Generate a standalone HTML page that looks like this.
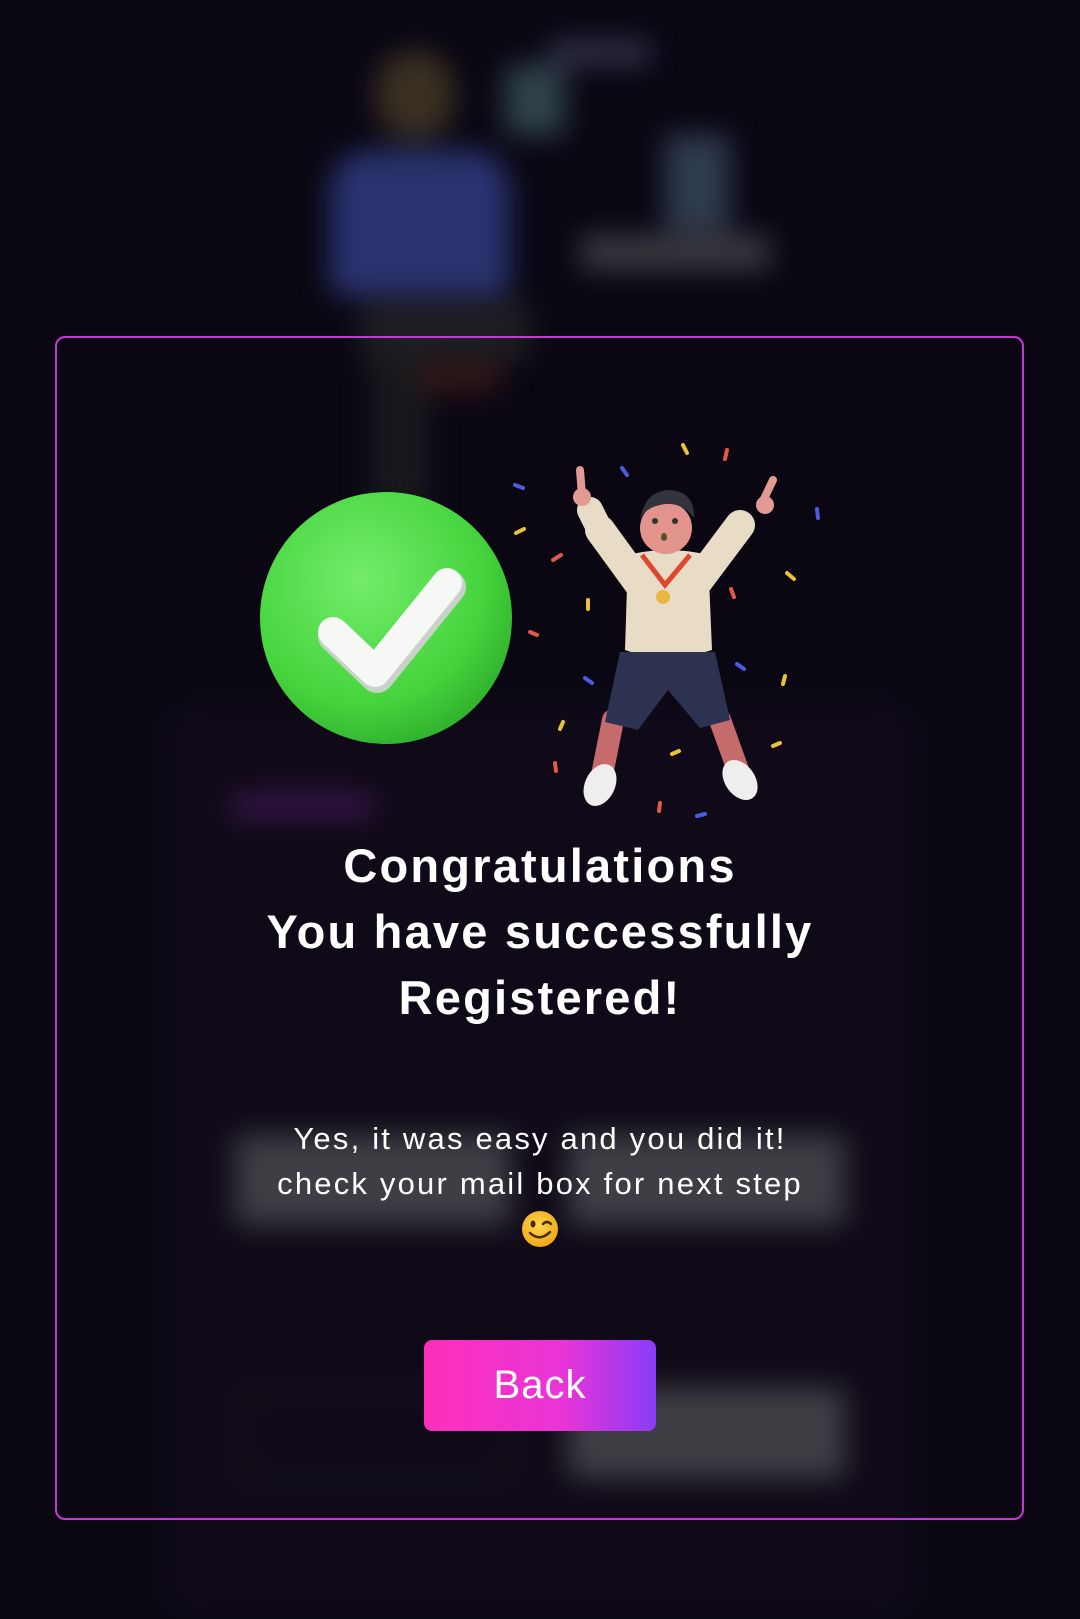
<!DOCTYPE html>
<html><head><meta charset="utf-8"><style>
html,body{margin:0;padding:0}
body{width:1080px;height:1619px;background:#0a0713;overflow:hidden;position:relative;font-family:"Liberation Sans",sans-serif}
.abs{position:absolute}
.blur{filter:blur(14px)}
.t{position:absolute;left:0;width:1080px;text-align:center;color:#fff}
</style></head><body>
<div class="abs blur" style="left:0;top:0;width:1080px;height:1619px">
  <div class="abs" style="left:375px;top:50px;width:80px;height:90px;border-radius:40px;background:#3a3022"></div>
  <div class="abs" style="left:330px;top:150px;width:180px;height:145px;border-radius:40px 40px 10px 10px;background:#2a3370"></div>
  <div class="abs" style="left:505px;top:65px;width:60px;height:70px;background:#4a6a70;opacity:.6"></div>
  <div class="abs" style="left:550px;top:40px;width:100px;height:25px;background:#5a5a80;opacity:.5"></div>
  <div class="abs" style="left:665px;top:135px;width:65px;height:95px;background:#3a4a60;opacity:.8"></div>
  <div class="abs" style="left:580px;top:235px;width:190px;height:35px;background:#3a3a40"></div>
  <div class="abs" style="left:360px;top:300px;width:170px;height:60px;background:#1e1e22"></div>
  <div class="abs" style="left:370px;top:360px;width:60px;height:150px;background:#18181c"></div>
  <div class="abs" style="left:420px;top:365px;width:80px;height:25px;background:#3a1a18"></div>
  <div class="abs" style="left:160px;top:700px;width:760px;height:919px;border-radius:30px;background:#100a18"></div>
  <div class="abs" style="left:232px;top:795px;width:140px;height:22px;background:#3a1650"></div>
  <div class="abs" style="left:235px;top:1135px;width:275px;height:90px;background:#3e3e44"></div>
  <div class="abs" style="left:568px;top:1135px;width:277px;height:90px;background:#3e3e44"></div>
  <div class="abs" style="left:240px;top:1390px;width:270px;height:90px;border:3px solid #2a2a2e;box-sizing:border-box"></div>
  <div class="abs" style="left:568px;top:1388px;width:277px;height:90px;background:#3e3e44"></div>
</div>
<div class="abs" style="left:55px;top:336px;width:969px;height:1184px;border:2px solid #c637d8;border-radius:10px;box-sizing:border-box"></div>
<svg class="abs" style="left:0;top:0" width="1080" height="1619">
  <defs>
    <radialGradient id="g" cx="40%" cy="35%" r="70%"><stop offset="0" stop-color="#74ec6a"/><stop offset=".7" stop-color="#45d43d"/><stop offset="1" stop-color="#2fae2c"/></radialGradient>
    <radialGradient id="e" cx="45%" cy="40%" r="60%"><stop offset="0" stop-color="#ffd84a"/><stop offset="1" stop-color="#f0a818"/></radialGradient>
  </defs>
  <circle cx="386" cy="618" r="126" fill="url(#g)"/>
  <path d="M333 632 L375 672 L447 583" fill="none" stroke="#c9d2c9" stroke-width="34" stroke-linecap="round" stroke-linejoin="round" transform="translate(2,4)"/>
  <path d="M333 632 L375 672 L447 583" fill="none" stroke="#f6f8f6" stroke-width="30" stroke-linecap="round" stroke-linejoin="round"/>
  <g stroke-width="4" stroke-linecap="round">
    <line x1="683" y1="445" x2="687" y2="453" stroke="#e8c33a"/>
    <line x1="727" y1="450" x2="725" y2="459" stroke="#e05a4a"/>
    <line x1="622" y1="468" x2="627" y2="475" stroke="#4a5ce0"/>
    <line x1="515" y1="485" x2="523" y2="488" stroke="#4a5ce0"/>
    <line x1="516" y1="533" x2="524" y2="529" stroke="#e8c33a"/>
    <line x1="553" y1="560" x2="561" y2="555" stroke="#e05a4a"/>
    <line x1="817" y1="509" x2="818" y2="518" stroke="#4a5ce0"/>
    <line x1="787" y1="573" x2="794" y2="579" stroke="#e8c33a"/>
    <line x1="731" y1="589" x2="734" y2="597" stroke="#e05a4a"/>
    <line x1="588" y1="600" x2="588" y2="609" stroke="#e8c33a"/>
    <line x1="530" y1="632" x2="537" y2="635" stroke="#e05a4a"/>
    <line x1="737" y1="664" x2="744" y2="669" stroke="#4a5ce0"/>
    <line x1="785" y1="676" x2="783" y2="684" stroke="#e8c33a"/>
    <line x1="585" y1="678" x2="592" y2="683" stroke="#4a5ce0"/>
    <line x1="563" y1="722" x2="560" y2="729" stroke="#e8c33a"/>
    <line x1="773" y1="746" x2="780" y2="743" stroke="#e8c33a"/>
    <line x1="672" y1="754" x2="679" y2="751" stroke="#e8c33a"/>
    <line x1="555" y1="763" x2="556" y2="771" stroke="#e05a4a"/>
    <line x1="660" y1="803" x2="659" y2="811" stroke="#e05a4a"/>
    <line x1="697" y1="816" x2="705" y2="814" stroke="#4a5ce0"/>
  </g>
  <g stroke-linecap="round">
    <line x1="600" y1="530" x2="640" y2="585" stroke="#e8dcc6" stroke-width="30"/>
    <line x1="590" y1="510" x2="600" y2="530" stroke="#e8dcc6" stroke-width="26"/>
    <line x1="740" y1="525" x2="695" y2="585" stroke="#e8dcc6" stroke-width="30"/>
    <line x1="580" y1="470" x2="582" y2="495" stroke="#e29a92" stroke-width="8"/>
    <line x1="773" y1="480" x2="762" y2="503" stroke="#e29a92" stroke-width="8"/>
    <circle cx="582" cy="497" r="9" fill="#e29a92"/>
    <circle cx="765" cy="505" r="9" fill="#e29a92"/>
    <line x1="613" y1="720" x2="602" y2="775" stroke="#c56b6b" stroke-width="22"/>
    <line x1="720" y1="720" x2="738" y2="770" stroke="#c56b6b" stroke-width="22"/>
    <ellipse cx="600" cy="785" rx="15" ry="22" fill="#eee" transform="rotate(25 600 785)"/>
    <ellipse cx="740" cy="780" rx="15" ry="22" fill="#eee" transform="rotate(-35 740 780)"/>
  </g>
  <path d="M628 555 Q668 545 708 555 L712 650 Q668 665 625 650 Z" fill="#e8dcc6"/>
  <path d="M620 652 L715 652 L730 720 L700 728 L668 690 L638 730 L605 722 Z" fill="#2d3250"/>
  <path d="M642 555 L665 585 L690 555" fill="none" stroke="#e0452f" stroke-width="5"/>
  <circle cx="663" cy="597" r="7" fill="#e8b840"/>
  <circle cx="666" cy="528" r="26" fill="#e2938c"/>
  <path d="M640 520 Q645 490 670 490 Q695 492 694 518 Q680 500 660 505 Q645 508 640 520Z" fill="#33333d"/>
  <circle cx="655" cy="521" r="3" fill="#333"/><circle cx="675" cy="521" r="3" fill="#333"/>
  <ellipse cx="664" cy="537" rx="3" ry="4" fill="#552"/>
  <!-- wink emoji -->
  <circle cx="540" cy="1229" r="18" fill="url(#e)"/>
  <ellipse cx="533" cy="1224" rx="2.5" ry="3.5" fill="#4a2c10"/>
  <path d="M543 1224 Q547 1220 551 1224" fill="none" stroke="#4a2c10" stroke-width="2.5" stroke-linecap="round"/>
  <path d="M530 1233 Q540 1242 550 1232" fill="none" stroke="#4a2c10" stroke-width="2.5" stroke-linecap="round"/>
</svg>
<div class="t" style="top:833px;font-size:47px;font-weight:bold;line-height:66px;letter-spacing:2.2px">Congratulations<br>You have successfully<br>Registered!</div>
<div class="t" style="top:1116px;font-size:31px;line-height:45px;letter-spacing:2.2px">Yes, it was easy and you did it!<br>check your mail box for next step</div>
<div class="abs" style="left:424px;top:1340px;width:232px;height:91px;border-radius:8px;background:linear-gradient(90deg,#fc30b8 0%,#e934d8 60%,#8a3cf8 100%);color:#fff;font-size:40px;line-height:91px;text-align:center;letter-spacing:1px">Back</div>
</body></html>
